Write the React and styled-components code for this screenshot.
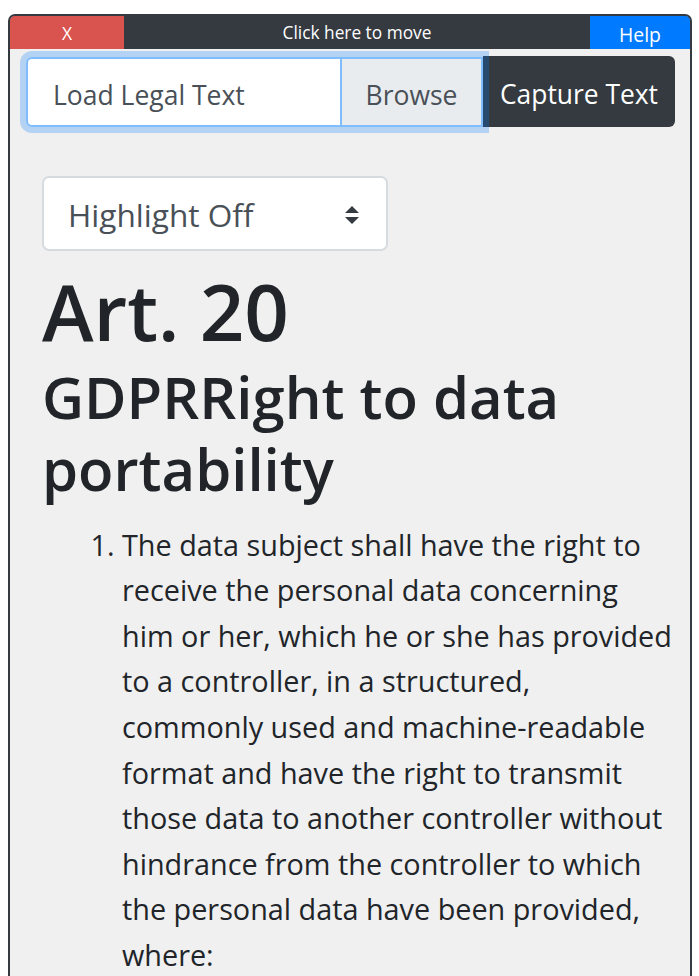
import React from "react";
import styled, { createGlobalStyle } from "styled-components";

const Global = createGlobalStyle`
  html, body { margin: 0; padding: 0; background: #fff; }
  body { font-family: "Open Sans", "Noto Sans", sans-serif; color: #212529; }
`;

const Page = styled.div`
  padding: 14px 7px 0 8px;
  height: 976px;
  box-sizing: border-box;
  overflow: hidden;
`;

const Panel = styled.div`
  height: 100%;
  border: 2px solid #343a40;
  border-bottom: none;
  border-radius: 7px 7px 0 0;
  background: #f0f0f0;
  overflow: hidden;
  box-sizing: border-box;
`;

const TitleBar = styled.div`
  display: flex;
  height: 33px;
  background: #343a40;
  color: #fff;
`;

const BarButton = styled.div`
  width: ${({ w }) => w}px;
  background: ${({ bg }) => bg};
  display: flex;
  align-items: center;
  justify-content: center;
  font-size: ${({ size }) => size || 16}px;
  padding-top: ${({ drop }) => drop || 0}px;
  box-sizing: border-box;
`;

const MoveHandle = styled.div`
  flex: 1;
  display: flex;
  align-items: center;
  justify-content: center;
  font-size: 17.3px;
`;

const Toolbar = styled.div`
  display: flex;
  padding: 8px 15px 0 16px;
  height: 70px;
`;

const FileBox = styled.label`
  position: relative;
  z-index: 2;
  display: flex;
  width: 457px;
  height: 70px;
  box-sizing: border-box;
  border: 2px solid #80bdff;
  border-radius: 6px 0 0 6px;
  background: #fff;
  box-shadow: 0 0 0 6px rgba(0, 123, 255, 0.25);
  font-size: 26.5px;
  color: #495057;
`;

const FileName = styled.span`
  flex: 1;
  display: flex;
  align-items: center;
  padding: 5px 0 0 25px;
`;

const BrowseTag = styled.span`
  display: flex;
  align-items: center;
  justify-content: center;
  width: 139px;
  padding-top: 5px;
  background: #e9ecef;
  border-left: 2px solid #80bdff;
`;

const CaptureButton = styled.button`
  width: 192px;
  height: 71px;
  margin-top: -1px;
  border: none;
  border-radius: 0 6px 6px 0;
  background: #343a40;
  color: #fff;
  font-family: inherit;
  font-size: 26.4px;
  padding: 5px 0 0;
`;

const Content = styled.div`
  padding: 49px 4px 0 32px;
`;

const SelectBox = styled.div`
  display: flex;
  align-items: center;
  width: 346px;
  height: 75px;
  box-sizing: border-box;
  border: 2px solid #d6dbe0;
  border-radius: 7px;
  background: #fff;
  padding: 2px 25px 0 24px;
  font-size: 31.6px;
  color: #495057;
`;

const Arrows = styled.svg`
  margin-left: auto;
  margin-right: 1px;
`;

const Title = styled.h1`
  margin: 14px 0 0;
  font-size: 78px;
  line-height: 1.2;
  font-weight: 600;
`;

const Subtitle = styled.h2`
  margin: 2px 0 0;
  font-size: 58px;
  line-height: 72px;
  font-weight: 600;
`;

const Items = styled.ol`
  margin: 17px 0 0;
  padding-left: 80px;
  font-size: 28.8px;
  line-height: 45.6px;
  white-space: nowrap;
`;

const lines = [
  "The data subject shall have the right to",
  "receive the personal data concerning",
  "him or her, which he or she has provided",
  "to a controller, in a structured,",
  "commonly used and machine-readable",
  "format and have the right to transmit",
  "those data to another controller without",
  "hindrance from the controller to which",
  "the personal data have been provided,",
  "where:",
];

export default function App() {
  return (
    <Page>
      <Global />
      <Panel>
        <TitleBar>
          <BarButton w={114} bg="#d9534f" size={17.5}>X</BarButton>
          <MoveHandle>Click here to move</MoveHandle>
          <BarButton w={100} bg="#007bff" size={19.4} drop={3}>Help</BarButton>
        </TitleBar>
        <Toolbar>
          <FileBox>
            <FileName>Load Legal Text</FileName>
            <BrowseTag>Browse</BrowseTag>
          </FileBox>
          <CaptureButton>Capture Text</CaptureButton>
        </Toolbar>
        <Content>
          <SelectBox>
            Highlight Off
            <Arrows width="16" height="20" viewBox="0 0 16 20">
              <path d="M8 1 L15 8 L1 8 Z M1 12 L15 12 L8 19 Z" fill="#343a40" />
            </Arrows>
          </SelectBox>
          <Title>Art. 20</Title>
          <Subtitle>GDPRRight to data portability</Subtitle>
          <Items>
            <li>
              {lines.map((l, i) => (
                <React.Fragment key={i}>
                  {l}
                  {i < lines.length - 1 && <br />}
                </React.Fragment>
              ))}
            </li>
          </Items>
        </Content>
      </Panel>
    </Page>
  );
}
